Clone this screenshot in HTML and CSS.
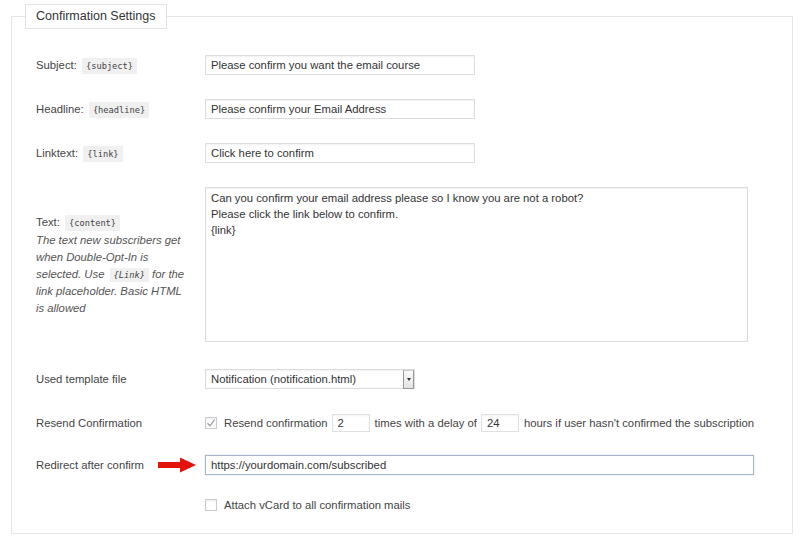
FILE: index.html
```html
<!DOCTYPE html>
<html>
<head>
<meta charset="utf-8">
<link rel="stylesheet" href="styles.css">
</head>
<body>
<fieldset class="box">
  <legend class="legend">Confirmation Settings</legend>

  <div class="row">
    <div class="label">Subject: <code>{subject}</code></div>
    <div class="field"><input class="text" type="text" value="Please confirm you want the email course"></div>
  </div>

  <div class="row">
    <div class="label">Headline: <code>{headline}</code></div>
    <div class="field"><input class="text" type="text" value="Please confirm your Email Address"></div>
  </div>

  <div class="row">
    <div class="label">Linktext: <code>{link}</code></div>
    <div class="field"><input class="text" type="text" value="Click here to confirm"></div>
  </div>

  <div class="row">
    <div class="label label-block">
      <div class="head">Text: <code>{content}</code></div>
      <p class="desc">The text new subscribers get when Double-Opt-In is selected. Use <code>{Link}</code> for the link placeholder. Basic HTML is allowed</p>
    </div>
    <div class="field"><textarea class="area">Can you confirm your email address please so I know you are not a robot?
Please click the link below to confirm.
{link}</textarea></div>
  </div>

  <div class="row row-template">
    <div class="label">Used template file</div>
    <div class="field">
      <div class="select-wrap">
        <select class="select"><option>Notification (notification.html)</option></select>
        <span class="select-btn"><span class="tri"></span></span>
      </div>
    </div>
  </div>

  <div class="row row-resend">
    <div class="label">Resend Confirmation</div>
    <div class="field inline">
      <span class="cb"><svg width="10" height="10" viewBox="0 0 10 10"><path d="M1.5 5.2 L4 7.8 L8.6 1.6" fill="none" stroke="#9aa0a6" stroke-width="1.3"/></svg></span>
      <span class="t1">Resend confirmation</span>
      <input class="num" type="text" value="2">
      <span>times with a delay of</span>
      <input class="num" type="text" value="24">
      <span>hours if user hasn't confirmed the subscription</span>
    </div>
  </div>

  <div class="row row-redirect">
    <div class="label label-arrow">
      <span>Redirect after confirm</span>
      <svg class="arrow" width="38" height="16" viewBox="0 0 38 16"><rect x="0" y="5" width="24" height="6" fill="#e3120b"/><polygon points="22,0.5 38,8 22,15.5" fill="#e3120b"/></svg>
    </div>
    <div class="field"><input class="text wide focus" type="text" value="https://yourdomain.com/subscribed"></div>
  </div>

  <div class="row row-attach">
    <div class="label"></div>
    <div class="field inline">
      <span class="cb"></span>
      <span class="t1">Attach vCard to all confirmation mails</span>
    </div>
  </div>
</fieldset>
</body>
</html>
```

FILE: styles.css
```css
html, body {
  margin: 0;
  padding: 0;
  background: #fff;
}
body {
  font-family: "Liberation Sans", Arial, sans-serif;
  font-size: 11.3px;
  color: #444;
}
.box {
  margin: 4px 7px 0 11px;
  padding: 14px 24px 19px 24px;
  border: 1px solid #e6e6e6;
  height: 530px;
  box-sizing: border-box;
  min-width: 0;
}
.legend {
  margin-left: -11px;
  padding: 0 10px;
  height: 25px;
  box-sizing: border-box;
  line-height: 23px;
  font-size: 12.5px;
  color: #333;
  border: 1px solid #e2e2e2;
  background: #fff;
}
.row {
  display: flex;
  align-items: center;
  padding: 12px 0;
}
.label {
  width: 169px;
  flex: none;
  line-height: 16px;
}
.label-block {
  line-height: 17px;
}
.head {
  margin-top: 2px;
}
.desc {
  margin: 0;
  width: 152px;
  font-style: italic;
  color: #555;
}
code {
  font-family: "DejaVu Sans Mono", "Liberation Mono", monospace;
  font-size: 8.7px;
  background: #f0f0f1;
  color: #444;
  padding: 3px 4px;
  margin-left: 2px;
}
.desc code {
  display: inline-block;
  font-style: italic;
  line-height: 14px;
  padding: 0 4px;
  vertical-align: 0;
}
.field {
  flex: 1;
  min-width: 0;
}
.text {
  display: block;
  width: 270px;
  height: 20px;
  box-sizing: border-box;
  border: 1px solid #dcdcdc;
  box-shadow: inset 0 1px 2px rgba(0,0,0,0.06);
  padding: 0 5px;
  font-family: inherit;
  font-size: 11.3px;
  color: #333;
  background: #fff;
  margin: 0;
}
.text.wide {
  width: 549px;
}
.text.focus {
  border-color: #a6b6c6;
  box-shadow: 0 0 1px rgba(100,130,160,0.5);
}
.area {
  display: block;
  width: 543px;
  height: 155px;
  box-sizing: border-box;
  border: 1px solid #dcdcdc;
  box-shadow: inset 0 1px 2px rgba(0,0,0,0.06);
  padding: 2px 5px;
  margin: 0;
  font-family: inherit;
  font-size: 11.3px;
  line-height: 16px;
  color: #333;
  resize: none;
}
.row-template {
  padding: 15px 0 12px;
}
.select-wrap {
  position: relative;
  width: 210px;
  height: 20px;
}
.select {
  appearance: none;
  -webkit-appearance: none;
  display: block;
  width: 210px;
  height: 20px;
  box-sizing: border-box;
  border: 1px solid #dcdcdc;
  box-shadow: inset 0 1px 2px rgba(0,0,0,0.06);
  padding: 0 5px;
  margin: 0;
  font-family: inherit;
  font-size: 11.3px;
  color: #333;
  background: #fff;
  border-radius: 0;
}
.select-btn {
  position: absolute;
  right: 1px;
  top: 1px;
  width: 9px;
  height: 17px;
  border: 1px solid #999;
  border-top-color: #ccc;
  background: linear-gradient(#fafafa, #e3e3e3);
  display: flex;
  align-items: center;
  justify-content: center;
}
.tri {
  width: 0;
  height: 0;
  border-left: 2.5px solid transparent;
  border-right: 2.5px solid transparent;
  border-top: 3px solid #333;
}
.inline {
  display: flex;
  align-items: center;
  height: 20px;
  white-space: nowrap;
}
.cb {
  width: 12px;
  height: 12px;
  box-sizing: border-box;
  border: 1px solid #c8ccd0;
  box-shadow: inset 0 1px 2px rgba(0,0,0,0.08);
  background: #fff;
  display: flex;
  align-items: center;
  justify-content: center;
  flex: none;
}
.t1 {
  margin-left: 7px;
}
.num {
  width: 38px;
  height: 18px;
  box-sizing: border-box;
  border: 1px solid #e0e0e0;
  box-shadow: inset 0 1px 2px rgba(0,0,0,0.05);
  padding: 0 5px;
  margin: 0 5px 0 4px;
  font-family: inherit;
  font-size: 11.3px;
  color: #333;
}
.row-redirect {
  padding: 10px 0 11px;
}
.label-arrow {
  display: flex;
  align-items: center;
  padding-right: 9px;
  box-sizing: border-box;
}
.arrow {
  margin-left: auto;
  display: block;
}
.row-attach {
  padding: 9px 0;
}
```
